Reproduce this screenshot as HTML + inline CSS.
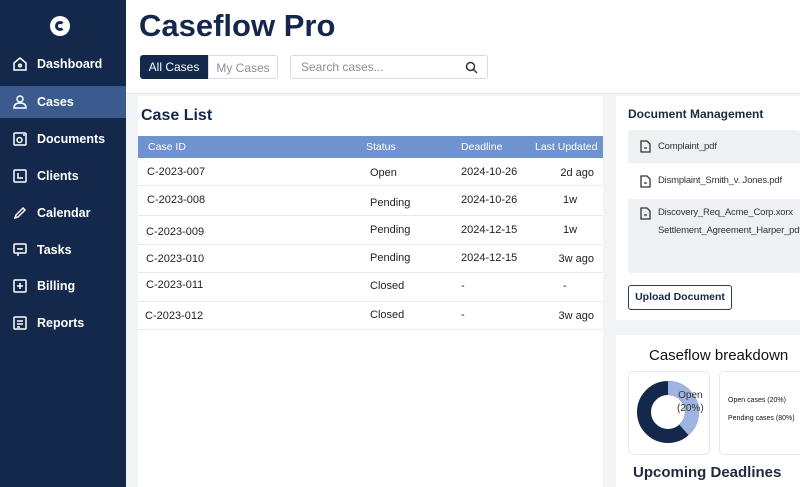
<!DOCTYPE html>
<html><head><meta charset="utf-8"><style>
*{margin:0;padding:0;box-sizing:border-box}
body{width:800px;height:487px;overflow:hidden;font-family:"Liberation Sans",sans-serif;background:#f3f4f6;position:relative;color:#1f2a3c}
.sb{position:absolute;left:0;top:0;width:126px;height:487px;background:#14284c}
.logo{position:absolute;left:50px;top:16px;width:20px;height:20px;border-radius:50%;background:#fff}
.logo:after{content:"";position:absolute;left:5px;top:5px;width:10px;height:10px;border-radius:50%;border:3px solid #14284c;border-right-color:#fff;box-sizing:border-box}
.ni{position:absolute;left:0;width:126px;height:32px;color:#fff;font-size:12.5px;font-weight:bold;padding-left:37px;line-height:32px}
.ni.a{background:#3b5a8e}
.ni svg{position:absolute;left:12px;top:8px}
.hdr{position:absolute;left:126px;top:0;width:674px;height:94px;background:#fff;border-bottom:1px solid #e6e8ec}
h1{position:absolute;left:139px;top:8px;font-size:31px;color:#14284c;font-weight:bold}
.tab{position:absolute;top:55px;height:24px;font-size:12px;line-height:24px;text-align:center}
.srch{position:absolute;left:290px;top:55px;width:198px;height:24px;border:1px solid #d8dbe0;border-radius:3px;font-size:12px;color:#8a8f98;line-height:22px;padding-left:10px}
.p1{position:absolute;left:138px;top:96px;width:465px;height:391px;background:#fff}
.p1 h2{position:absolute;left:3px;top:11px;font-size:16px;color:#14284c}
.th{position:absolute;left:0;top:40px;width:465px;height:22px;background:#6f93cf;color:#fff;font-size:10.5px;line-height:22px}
.r{position:absolute;left:0;width:465px;border-bottom:1px solid #e8eaee;font-size:11px;color:#222}
.r span,.th span{position:absolute}
.r span.lu{left:auto;right:9px}
.p2{position:absolute;left:616px;top:96px;width:184px;height:224px;background:#fff}
.docs{position:absolute;left:12px;top:34px;width:172px;height:143px;background:#eef0f3;border-radius:3px;overflow:hidden}
.dr{position:absolute;left:0;width:172px;font-size:9.5px;color:#333;white-space:nowrap;letter-spacing:-0.2px}
.dr svg{position:absolute;left:12px}
.btn{position:absolute;left:12px;top:189px;width:104px;height:25px;border:1.5px solid #2b3b55;border-radius:3px;font-size:10.5px;font-weight:bold;text-align:center;line-height:22px;color:#14284c}
.p3{position:absolute;left:616px;top:335px;width:184px;height:152px;background:#fff}
</style></head><body>
<div class="sb">
<div class="logo"></div>
<div class="ni" style="top:48px"><svg width="16" height="16" viewBox="0 0 16 16" fill="none" stroke="#fff" stroke-width="1.5"><path d="M2 7L8 2l6 5v7H2z"/><circle cx="8" cy="9.5" r="1.3"/></svg>Dashboard</div>
<div class="ni a" style="top:86px"><svg width="16" height="16" viewBox="0 0 16 16" fill="none" stroke="#fff" stroke-width="1.5"><circle cx="8" cy="5" r="3"/><path d="M2 14c0-4 3-5 6-5s6 1 6 5z"/></svg>Cases</div>
<div class="ni" style="top:123px"><svg width="16" height="16" viewBox="0 0 16 16" fill="none" stroke="#fff" stroke-width="1.5"><rect x="2" y="2" width="12" height="12" rx="1"/><circle cx="7.5" cy="9" r="2.5"/><path d="M11 4h2"/></svg>Documents</div>
<div class="ni" style="top:160px"><svg width="16" height="16" viewBox="0 0 16 16" fill="none" stroke="#fff" stroke-width="1.5"><rect x="2" y="2" width="12" height="12" rx="1"/><path d="M6 5v5h5"/></svg>Clients</div>
<div class="ni" style="top:197px"><svg width="16" height="16" viewBox="0 0 16 16" fill="none" stroke="#fff" stroke-width="1.5"><path d="M3 13l1-3 7-7 2 2-7 7z"/></svg>Calendar</div>
<div class="ni" style="top:234px"><svg width="16" height="16" viewBox="0 0 16 16" fill="none" stroke="#fff" stroke-width="1.5"><rect x="2" y="2" width="12" height="9" rx="1"/><path d="M6 11v3M6 6v1h4V6"/></svg>Tasks</div>
<div class="ni" style="top:270px"><svg width="16" height="16" viewBox="0 0 16 16" fill="none" stroke="#fff" stroke-width="1.5"><rect x="2" y="2" width="12" height="12" rx="1"/><path d="M8 5v6M5 8h6"/></svg>Billing</div>
<div class="ni" style="top:307px"><svg width="16" height="16" viewBox="0 0 16 16" fill="none" stroke="#fff" stroke-width="1.5"><rect x="2" y="2" width="12" height="12" rx="1"/><path d="M5 6h6M5 9h6M5 12h3"/></svg>Reports</div>
</div>
<div class="hdr"></div>
<h1>Caseflow Pro</h1>
<div class="tab" style="left:140px;width:68px;background:#14284c;color:#fff;border-radius:3px 0 0 3px">All Cases</div>
<div class="tab" style="left:208px;width:70px;border:1px solid #d8dbe0;color:#8a8f98;border-radius:0 3px 3px 0">My Cases</div>
<div class="srch">Search cases...<svg style="position:absolute;right:9px;top:5px" width="13" height="13" viewBox="0 0 13 13" fill="none" stroke="#333" stroke-width="1.5"><circle cx="5.5" cy="5.5" r="4"/><path d="M8.5 8.5L12 12"/></svg></div>
<div class="p1"><h2>Case List</h2>
<div class="th"><span style="left:10px">Case ID</span><span style="left:228px">Status</span><span style="left:323px">Deadline</span><span style="left:397px">Last Updated</span></div>
<div class="r" style="top:62px;height:28px"><span style="left:9px;top:8px">C-2023-007</span><span style="left:232px;top:9px">Open</span><span style="left:323px;top:8px">2024-10-26</span><span class="lu" style="top:9px">2d ago</span></div>
<div class="r" style="top:90px;height:30px"><span style="left:9px;top:8px">C-2023-008</span><span style="left:232px;top:11px">Pending</span><span style="left:323px;top:8px">2024-10-26</span><span style="left:425px;top:8px">1w</span></div>
<div class="r" style="top:120px;height:29px"><span style="left:8px;top:10px">C-2023-009</span><span style="left:232px;top:8px">Pending</span><span style="left:323px;top:8px">2024-12-15</span><span style="left:425px;top:8px">1w</span></div>
<div class="r" style="top:149px;height:28px"><span style="left:8px;top:8px">C-2023-010</span><span style="left:232px;top:7px">Pending</span><span style="left:323px;top:7px">2024-12-15</span><span class="lu" style="top:8px">3w ago</span></div>
<div class="r" style="top:177px;height:29px"><span style="left:8px;top:6px">C-2023-011</span><span style="left:232px;top:7px">Closed</span><span style="left:323px;top:7px">-</span><span style="left:425px;top:7px">-</span></div>
<div class="r" style="top:206px;height:28px"><span style="left:7px;top:8px">C-2023-012</span><span style="left:232px;top:7px">Closed</span><span style="left:323px;top:7px">-</span><span class="lu" style="top:8px">3w ago</span></div>
</div>
<div class="p2">
<div style="position:absolute;left:12px;top:11px;font-size:12px;font-weight:bold;color:#1f2a3c">Document Management</div>
<div class="docs">
<div class="dr" style="top:0;height:33px;line-height:33px;padding-left:30px"><svg style="top:10px" width="11" height="13" viewBox="0 0 11 13" fill="none" stroke="#333" stroke-width="1.3"><path d="M1 1h6l3 3v8H1z"/><path d="M4 8h3"/></svg>Complaint_pdf</div>
<div class="dr" style="top:33px;height:36px;line-height:36px;padding-left:30px;background:#fff"><svg style="top:12px" width="11" height="13" viewBox="0 0 11 13" fill="none" stroke="#333" stroke-width="1.3"><path d="M1 1h6l3 3v8H1z"/><path d="M4 8h3"/></svg>Dismplaint_Smith_v. Jones.pdf</div>
<div class="dr" style="top:74px;padding-left:30px;line-height:18px"><svg style="top:3px" width="11" height="13" viewBox="0 0 11 13" fill="none" stroke="#333" stroke-width="1.3"><path d="M1 1h6l3 3v8H1z"/><path d="M4 8h3"/></svg>Discovery_Req_Acme_Corp.xorx<br>Settlement_Agreement_Harper_pdf</div>
</div>
<div class="btn">Upload Document</div>
</div>
<div class="p3">
<div style="position:absolute;left:33px;top:12px;font-size:15px;color:#111">Caseflow breakdown</div>
<div style="position:absolute;left:12px;top:36px;width:82px;height:84px;border:1px solid #e6e8ec;border-radius:5px">
<svg style="position:absolute;left:7px;top:8px" width="64" height="64" viewBox="0 0 64 64"><circle cx="32" cy="32" r="24" fill="none" stroke="#14284c" stroke-width="14"/><path d="M32 8A24 24 0 0 1 48 50" fill="none" stroke="#9fb4e0" stroke-width="14"/></svg>
<div style="position:absolute;left:48px;top:17px;font-size:10px;color:#333;text-align:center;line-height:13px">Open<br>(20%)</div></div>
<div style="position:absolute;left:103px;top:36px;width:90px;height:84px;border:1px solid #e6e8ec;border-radius:5px;font-size:7px;color:#111"><div style="position:absolute;left:8px;top:25px">Open cases (20%)</div><div style="position:absolute;left:8px;top:43px">Pending cases (80%)</div></div>
<div style="position:absolute;left:17px;top:129px;font-size:15px;font-weight:bold;color:#1f2a3c">Upcoming Deadlines</div>
</div>
</body></html>
